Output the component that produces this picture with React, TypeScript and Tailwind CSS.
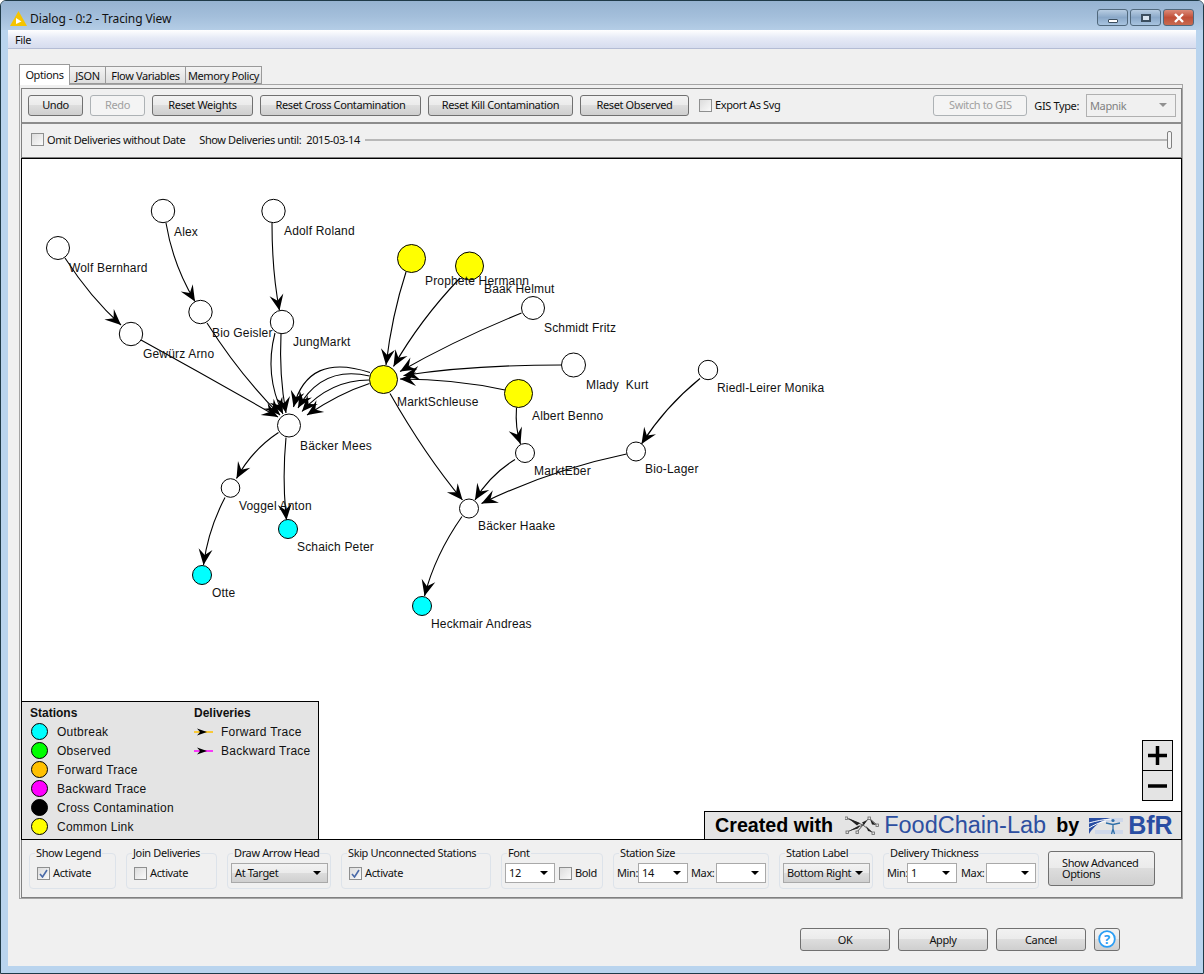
import type { ReactNode } from 'react';

type Pt = [number, number];

const CYAN = '#00ffff';
const YELLOW = '#ffff00';

const nodes: { x: number; y: number; r: number; fill?: string; label: string; lx: number; ly: number }[] = [
  { x: 58, y: 248, r: 11.5, label: 'Wolf Bernhard', lx: 69, ly: 272 },
  { x: 163, y: 211, r: 11.7, label: 'Alex', lx: 174, ly: 236 },
  { x: 273.5, y: 211, r: 11.7, label: 'Adolf Roland', lx: 284, ly: 235 },
  { x: 200.5, y: 312, r: 11.7, label: 'Bio Geisler', lx: 212, ly: 337 },
  { x: 282, y: 322, r: 11.7, label: 'JungMarkt', lx: 293, ly: 346 },
  { x: 131, y: 334, r: 11.7, label: 'Gewürz Arno', lx: 143, ly: 358 },
  { x: 289, y: 425.5, r: 11.5, label: 'Bäcker Mees', lx: 300, ly: 450 },
  { x: 383.5, y: 379.5, r: 14, fill: YELLOW, label: 'MarktSchleuse', lx: 397, ly: 406 },
  { x: 411.5, y: 258.5, r: 14, fill: YELLOW, label: 'Prophete Hermann', lx: 425, ly: 285 },
  { x: 469.5, y: 266, r: 14, fill: YELLOW, label: 'Baak Helmut', lx: 484, ly: 293 },
  { x: 533, y: 308, r: 11.5, label: 'Schmidt Fritz', lx: 544, ly: 332 },
  { x: 573.5, y: 365, r: 12, label: 'Mlady  Kurt', lx: 586, ly: 389 },
  { x: 518.5, y: 393.5, r: 14, fill: YELLOW, label: 'Albert Benno', lx: 532, ly: 420 },
  { x: 708, y: 370, r: 9.7, label: 'Riedl-Leirer Monika', lx: 717, ly: 392 },
  { x: 636, y: 451.5, r: 9.5, label: 'Bio-Lager', lx: 645, ly: 473 },
  { x: 525, y: 453, r: 9.5, label: 'MarktEber', lx: 534, ly: 475 },
  { x: 469, y: 508.5, r: 9.5, label: 'Bäcker Haake', lx: 478, ly: 530 },
  { x: 422, y: 606, r: 9.5, fill: CYAN, label: 'Heckmair Andreas', lx: 431, ly: 628 },
  { x: 230.5, y: 488, r: 9.3, label: 'Voggel Anton', lx: 239, ly: 510 },
  { x: 288, y: 529, r: 9.5, fill: CYAN, label: 'Schaich Peter', lx: 297, ly: 551 },
  { x: 202, y: 575, r: 9.5, fill: CYAN, label: 'Otte', lx: 212, ly: 597 },
];

// start, control, tip of each delivery
const edges: [Pt, Pt, Pt][] = [
  [[65, 258], [90, 297], [121, 325]],
  [[166, 223], [173, 265], [195, 301.5]],
  [[272, 223], [272, 272], [279.5, 310.5]],
  [[141, 340], [210, 378], [278, 417]],
  [[207, 323], [240, 375], [280, 415]],
  [[275, 333], [264, 375], [283, 414]],
  [[281, 334], [279, 375], [286, 413]],
  [[370, 372.5], [308, 352], [293.5, 407]],
  [[369.5, 376], [322, 365], [298, 408]],
  [[369, 380], [330, 380], [302, 411.5]],
  [[369.5, 383.5], [340, 393], [307, 415]],
  [[406, 272], [392, 315], [386, 365]],
  [[460, 278], [420, 320], [393.5, 366.5]],
  [[521.5, 313], [455, 340], [400, 371.5]],
  [[561.5, 365], [470, 365], [403.5, 375.5]],
  [[505, 390], [455, 379], [400, 379]],
  [[390, 393.5], [425, 455], [462.5, 500]],
  [[516.5, 407.5], [515, 428], [520.5, 444]],
  [[515, 459.5], [490, 475], [475, 500]],
  [[626.5, 454], [550, 470], [481.5, 503.5]],
  [[700, 378.5], [665, 407], [641.5, 444]],
  [[462, 516.5], [435, 555], [424.5, 596]],
  [[278.5, 432.5], [252, 450], [236.5, 478.5]],
  [[286, 437.5], [282, 480], [286.5, 520]],
  [[225, 497.5], [208, 530], [203.5, 565]],
];

function arrowHead(ctrl: Pt, tip: Pt) {
  const dx = tip[0] - ctrl[0];
  const dy = tip[1] - ctrl[1];
  const len = Math.hypot(dx, dy);
  const ux = dx / len;
  const uy = dy / len;
  const at = (back: number, side: number) =>
    `${tip[0] - ux * back - uy * side},${tip[1] - uy * back + ux * side}`;
  return [at(0, 0), at(16, 7), at(10, 0), at(16, -7)].join(' ');
}

function Btn({ children, className = '', disabled = false }: { children: ReactNode; className?: string; disabled?: boolean }) {
  return (
    <button
      className={`h-[21px] shrink-0 rounded-[3px] border pb-[1px] text-[11px] leading-none ${
        disabled
          ? 'border-[#adb2b5] bg-[#f4f4f4] text-[#a0a0a0]'
          : 'border-[#707070] bg-[linear-gradient(#f2f2f2_0%,#ebebeb_48%,#dddddd_50%,#cfcfcf_100%)] text-[#111]'
      } ${className}`}
    >
      {children}
    </button>
  );
}

function CheckBox({ label, checked = false, className = '' }: { label: string; checked?: boolean; className?: string }) {
  return (
    <div className={`flex shrink-0 items-center gap-[3px] whitespace-nowrap text-[11px] leading-none text-[#111] ${className}`}>
      <span className="flex h-[13px] w-[13px] items-center justify-center border border-[#8e8f8f] bg-[linear-gradient(135deg,#dcdcdc,#fafafa)]">
        {checked && (
          <svg width="9" height="9" viewBox="0 0 9 9">
            <path d="M1 5 L3.5 8 L8 1" fill="none" stroke="#4a6aa8" strokeWidth="1.6" />
          </svg>
        )}
      </span>
      <span className="pb-[1px]">{label}</span>
    </div>
  );
}

function Combo({ value = '', className = '', raised = false }: { value?: string; className?: string; raised?: boolean }) {
  return (
    <div
      className={`flex h-[20px] shrink-0 items-center justify-between whitespace-nowrap border border-[#a9a9a9] pl-[3px] pr-[6px] text-[11px] leading-none text-[#111] ${
        raised ? 'bg-[linear-gradient(#f2f2f2_0%,#ebebeb_48%,#dddddd_50%,#cfcfcf_100%)]' : 'bg-white'
      } ${className}`}
    >
      <span className="pb-[1px]">{value}</span>
      <svg width="8" height="4" viewBox="0 0 8 4">
        <path d="M0 0H8L4 4Z" fill="#000" />
      </svg>
    </div>
  );
}

function Group({ title, className = '', children }: { title: string; className?: string; children: ReactNode }) {
  return (
    <fieldset className={`h-[43px] shrink-0 rounded-[4px] border border-[#dde3ea] pl-[3px] ${className}`}>
      <legend className="ml-[2px] whitespace-nowrap px-[1px] text-[11px] leading-[14px] text-[#111]">{title}</legend>
      <div className="mt-[3px] flex h-[20px] items-center">{children}</div>
    </fieldset>
  );
}

function WindowButton({ className = '', children }: { className?: string; children: ReactNode }) {
  return (
    <div className={`flex h-[17px] w-[31px] items-center justify-center rounded-[3px] border border-[#50687c] ${className}`}>
      {children}
    </div>
  );
}

function LegendRow({ color, label }: { color: string; label: string }) {
  return (
    <div className="flex h-[19px] items-center">
      <span className="ml-[1px] mr-[9px] h-[17px] w-[17px] rounded-full border border-black" style={{ background: color }} />
      {label}
    </div>
  );
}

function LegendArrow({ color, label }: { color: string; label: string }) {
  return (
    <div className="flex h-[19px] items-center gap-[8px]">
      <svg width="19" height="8" viewBox="0 0 19 8">
        <path d="M0 4H19" stroke={color} strokeWidth="1.5" />
        <path d="M3 0.5L13 4L3 7.5L6 4Z" fill="#000" />
      </svg>
      {label}
    </div>
  );
}

function FoodChainMark() {
  return (
    <svg width="34" height="19" viewBox="0 0 34 19" className="shrink-0">
      <path d="M1 2L18 9L12 16M2 16L18 9L28 17M24 2L18 9M24 2L32 9" fill="none" stroke="#555" strokeWidth="1" />
      <path d="M3 2L15 7L12 9.500ZM4 15L15 9L13 12.500ZM21 10L27 16L23 15ZM25 3L31 9L27 8.500ZM22 4L19 9L17 6.500Z" fill="#222" />
      <g fill="#e4e4e4" stroke="#666" strokeWidth="0.8">
        <rect x="0" y="1" width="2.500" height="2.500" />
        <rect x="1" y="15" width="2.500" height="2.500" />
        <rect x="11" y="15" width="2.500" height="2.500" />
        <rect x="23" y="1" width="2.500" height="2.500" />
        <rect x="27" y="16" width="2.500" height="2.500" />
        <rect x="31" y="8" width="2.500" height="2.500" />
      </g>
    </svg>
  );
}

function BfrMark() {
  return (
    <svg width="34" height="18" viewBox="0 0 34 18" className="shrink-0">
      <path d="M0 1H34V5H0ZM6 13H34V17H6Z" fill="#cfd8ea" />
      <path d="M0 1H22C12 3 5 9 0 17Z" fill="#2a4ea3" />
      <path d="M0 6C7 4 14 2.500 22 2M0 11C5 8 10 5.500 17 4" fill="none" stroke="#fff" strokeWidth="1" />
      <circle cx="24" cy="3.500" r="1.600" fill="#2f6fa8" />
      <path d="M17 6L24 7.500L31 6M24 7V12L22.500 17M24 12L25.500 17" fill="none" stroke="#2f6fa8" strokeWidth="1.300" />
    </svg>
  );
}

export default function App() {
  return (
    <div className="flex h-[974px] w-[1204px] flex-col overflow-hidden rounded-t-[6px] border border-[#1f3a48] bg-[#b9d4ee] font-['Noto_Sans',sans-serif] tracking-[-0.38px]">
      {/* Title bar */}
      <div className="flex h-[29px] shrink-0 items-center bg-[linear-gradient(#96b3d1,#a4bfdb_55%,#b4cde6)] pl-[9px] pr-[9px] pt-[6px]">
        <svg width="17" height="15" viewBox="0 0 17 15" className="shrink-0">
          <path d="M8.500 0L17 15H0Z" fill="#f5c400" />
          <path d="M6 7L11.500 10.500L6 13Z" fill="#fff" />
        </svg>
        <span className="ml-[3px] text-[12px] leading-none tracking-[-0.1px] text-[#111]">Dialog - 0:2 - Tracing View</span>
        <div className="mb-[2px] ml-auto flex gap-[2px]">
          <WindowButton className="bg-[linear-gradient(#b8cde2,#8aa8c8_50%,#a8c4e0)]">
            <span className="mt-[6px] h-[4px] w-[10px] rounded-[1px] border border-[#3c4f60] bg-white" />
          </WindowButton>
          <WindowButton className="bg-[linear-gradient(#b8cde2,#8aa8c8_50%,#a8c4e0)]">
            <span className="h-[8px] w-[10px] border-2 border-[#3c4f60] bg-[#d8e4f0]" />
          </WindowButton>
          <WindowButton className="bg-[linear-gradient(#dc8a78,#c04f38_50%,#c86a50)]">
            <svg width="12" height="10" viewBox="0 0 12 10">
              <path d="M2 1L10 9M10 1L2 9" stroke="#fff" strokeWidth="2.400" />
            </svg>
          </WindowButton>
        </div>
      </div>

      {/* Client area */}
      <div className="mx-[7px] mb-[7px] flex flex-1 flex-col bg-[#f0f0f0]">
        <div className="flex h-[19px] shrink-0 items-center border-b border-[#b4bcd4] bg-[linear-gradient(#ffffff,#e6eaf6_45%,#d6dcee)] pl-[7px] pt-[1px] text-[11px] leading-none text-[#111]">
          File
        </div>

        {/* Tabs */}
        <div className="mt-[15px] flex h-[20px] shrink-0 items-end whitespace-nowrap pl-[11px] text-[11px] leading-none text-[#111]">
          <div className="relative z-10 mb-[-1px] flex h-[21px] w-[51px] items-center justify-center border border-b-0 border-[#9a9a9a] bg-white pb-[2px]">Options</div>
          <div className="flex h-[18px] w-[36px] items-center justify-center border border-l-0 border-[#9a9a9a] bg-[linear-gradient(#f4f4f4,#dedede)]">JSON</div>
          <div className="flex h-[18px] w-[80px] items-center justify-center border border-l-0 border-[#9a9a9a] bg-[linear-gradient(#f4f4f4,#dedede)]">Flow Variables</div>
          <div className="flex h-[18px] w-[76px] items-center justify-center border border-l-0 border-[#9a9a9a] bg-[linear-gradient(#f4f4f4,#dedede)]">Memory Policy</div>
        </div>

        {/* Tab panel */}
        <div className="ml-[11px] h-[815px] w-[1164px] shrink-0 border border-[#a5a5a5] pl-[1px] pt-[3px]">
          <div className="flex h-full flex-col border-b border-[#808080]">
            {/* Toolbar */}
            <div className="flex h-[36px] shrink-0 items-center gap-[7px] border-x border-b-2 border-t border-x-[#808080] border-b-[#8c8c8c] border-t-[#808080] pb-[1px] pl-[6px] pr-[5px]">
              <Btn className="w-[55px]">Undo</Btn>
              <Btn className="w-[55px]" disabled>Redo</Btn>
              <Btn className="w-[101px]">Reset Weights</Btn>
              <Btn className="w-[161px]">Reset Cross Contamination</Btn>
              <Btn className="w-[145px]">Reset Kill Contamination</Btn>
              <Btn className="w-[109px]">Reset Observed</Btn>
              <CheckBox label="Export As Svg" className="ml-[3px]" />
              <Btn className="ml-auto w-[94px]" disabled>Switch to GIS</Btn>
              <span className="text-[11px] leading-none text-[#111]">GIS Type:</span>
              <div className="flex h-[23px] w-[90px] items-center justify-between border border-[#b0b0b0] bg-[#f0f0f0] pl-[3px] pr-[8px] text-[11px] leading-none text-[#808080]">
                Mapnik
                <svg width="8" height="4" viewBox="0 0 8 4">
                  <path d="M0 0H8L4 4Z" fill="#909090" />
                </svg>
              </div>
            </div>

            {/* Date filter */}
            <div className="flex h-[34px] shrink-0 items-center border-x border-b border-[#808080] pb-[2px] pl-[9px] pr-[10px] text-[11px] leading-none text-[#111]">
              <CheckBox label="Omit Deliveries without Date" />
              <span className="ml-[14px] whitespace-pre">Show Deliveries until:  2015-03-14</span>
              <div className="relative ml-[5px] h-[2px] flex-1 bg-[#b8b8b8]">
                <span className="absolute right-[-1px] top-[-8px] h-[18px] w-[5px] rounded-[2px] border border-[#808080] bg-[#f4f4f4]" />
              </div>
            </div>

            {/* Graph canvas */}
            <div className="relative h-[682px] shrink-0 border border-black bg-white">
              <svg viewBox="22 159 1159 680" className="block h-full w-full font-['Liberation_Sans',sans-serif] text-[12px] tracking-[0.17px]">
                {edges.map(([a, c, t], i) => (
                  <g key={i}>
                    <path d={`M${a[0]} ${a[1]}Q${c[0]} ${c[1]} ${t[0]} ${t[1]}`} fill="none" stroke="#000" strokeWidth="1.100" />
                    <polygon points={arrowHead(c, t)} fill="#000" />
                  </g>
                ))}
                {nodes.map((n) => (
                  <circle key={n.label} cx={n.x} cy={n.y} r={n.r} fill={n.fill ?? '#fff'} stroke="#000" strokeWidth="1" />
                ))}
                {nodes.map((n) => (
                  <text key={n.label} x={n.lx} y={n.ly} fill="#111" xmlSpace="preserve">
                    {n.label}
                  </text>
                ))}
              </svg>

              {/* Legend */}
              <div className="absolute bottom-0 left-0 flex h-[138px] w-[297px] border-r border-t border-black bg-[#e4e4e4] pl-[8px] pt-[5px] font-['Liberation_Sans',sans-serif] text-[12px] leading-none tracking-[0.25px] text-[#111]">
                <div className="w-[164px]">
                  <div className="h-[15px] font-bold tracking-normal">Stations</div>
                  <LegendRow color={CYAN} label="Outbreak" />
                  <LegendRow color="#00ff00" label="Observed" />
                  <LegendRow color="#ffc000" label="Forward Trace" />
                  <LegendRow color="#ff00ff" label="Backward Trace" />
                  <LegendRow color="#000000" label="Cross Contamination" />
                  <LegendRow color={YELLOW} label="Common Link" />
                </div>
                <div>
                  <div className="h-[15px] font-bold tracking-normal">Deliveries</div>
                  <LegendArrow color="#ffc000" label="Forward Trace" />
                  <LegendArrow color="#ff00ff" label="Backward Trace" />
                </div>
              </div>

              {/* Zoom */}
              <div className="absolute right-[8px] top-[581px] flex h-[61px] w-[31px] flex-col border border-black bg-[#e4e4e4]">
                <div className="flex flex-1 items-center justify-center border-b border-black">
                  <svg width="19" height="19" viewBox="0 0 19 19">
                    <path d="M0 9.500H19M9.500 0V19" stroke="#000" strokeWidth="3.500" />
                  </svg>
                </div>
                <div className="flex flex-1 items-center justify-center">
                  <svg width="19" height="4" viewBox="0 0 19 4">
                    <path d="M0 2H19" stroke="#000" strokeWidth="3.500" />
                  </svg>
                </div>
              </div>

              {/* Credit */}
              <div className="absolute bottom-0 right-0 flex h-[28px] w-[477px] items-center whitespace-nowrap border-l border-t border-black bg-[#e4e4e4] pl-[10px] font-['Liberation_Sans',sans-serif] text-[19.7px] font-bold leading-none tracking-normal text-black">
                <span>Created with</span>
                <span className="ml-[12px] flex"><FoodChainMark /></span>
                <span className="ml-[5px] text-[23.5px] font-normal text-[#2d4fa0]">FoodChain-Lab</span>
                <span className="ml-[10px]">by</span>
                <span className="ml-[10px] flex"><BfrMark /></span>
                <span className="ml-[5px] text-[25px] text-[#2a4ea3]">BfR</span>
              </div>
            </div>

            {/* Display options */}
            <div className="flex flex-1 items-start gap-[10px] border-x border-[#808080] pl-[7px] pt-[6px]">
              <Group title="Show Legend" className="w-[87px]">
                <CheckBox label="Activate" checked className="ml-[4px]" />
              </Group>
              <Group title="Join Deliveries" className="w-[91px]">
                <CheckBox label="Activate" className="ml-[4px]" />
              </Group>
              <Group title="Draw Arrow Head" className="w-[104px]">
                <Combo value="At Target" raised className="w-[97px]" />
              </Group>
              <Group title="Skip Unconnected Stations" className="w-[150px]">
                <CheckBox label="Activate" checked className="ml-[4px]" />
              </Group>
              <Group title="Font" className="w-[102px]">
                <Combo value="12" className="w-[50px]" />
                <CheckBox label="Bold" className="ml-[4px]" />
              </Group>
              <Group title="Station Size" className="w-[156px]">
                <span className="w-[21px] pb-[1px] text-[11px] leading-none text-[#111]">Min:</span>
                <Combo value="14" className="w-[50px]" />
                <span className="ml-[3px] w-[25px] pb-[1px] text-[11px] leading-none text-[#111]">Max:</span>
                <Combo className="w-[50px]" />
              </Group>
              <Group title="Station Label" className="w-[94px]">
                <Combo value="Bottom Right" raised className="w-[87px]" />
              </Group>
              <Group title="Delivery Thickness" className="w-[156px]">
                <span className="w-[20px] pb-[1px] text-[11px] leading-none text-[#111]">Min:</span>
                <Combo value="1" className="w-[50px]" />
                <span className="ml-[4px] w-[25px] pb-[1px] text-[11px] leading-none text-[#111]">Max:</span>
                <Combo className="w-[50px]" />
              </Group>
              <Btn className="ml-[-1px] mt-[5px] h-[35px] w-[107px] pl-[13px] pr-[8px] text-left leading-[14px]">Show Advanced Options</Btn>
            </div>
          </div>
        </div>

        {/* Dialog buttons */}
        <div className="mt-[29px] flex justify-end gap-[8px] pr-[76px]">
          <Btn className="h-[23px] w-[90px]">OK</Btn>
          <Btn className="h-[23px] w-[90px]">Apply</Btn>
          <Btn className="h-[23px] w-[90px]">Cancel</Btn>
          <Btn className="flex h-[23px] w-[26px] items-center justify-center">
            <svg width="18" height="18" viewBox="0 0 18 18">
              <circle cx="9" cy="9" r="7.800" fill="#fff" stroke="#2a9df4" strokeWidth="1.800" />
              <text x="9" y="13.500" textAnchor="middle" fontSize="13" fontWeight="700" fill="#2a9df4">?</text>
            </svg>
          </Btn>
        </div>
      </div>
    </div>
  );
}
